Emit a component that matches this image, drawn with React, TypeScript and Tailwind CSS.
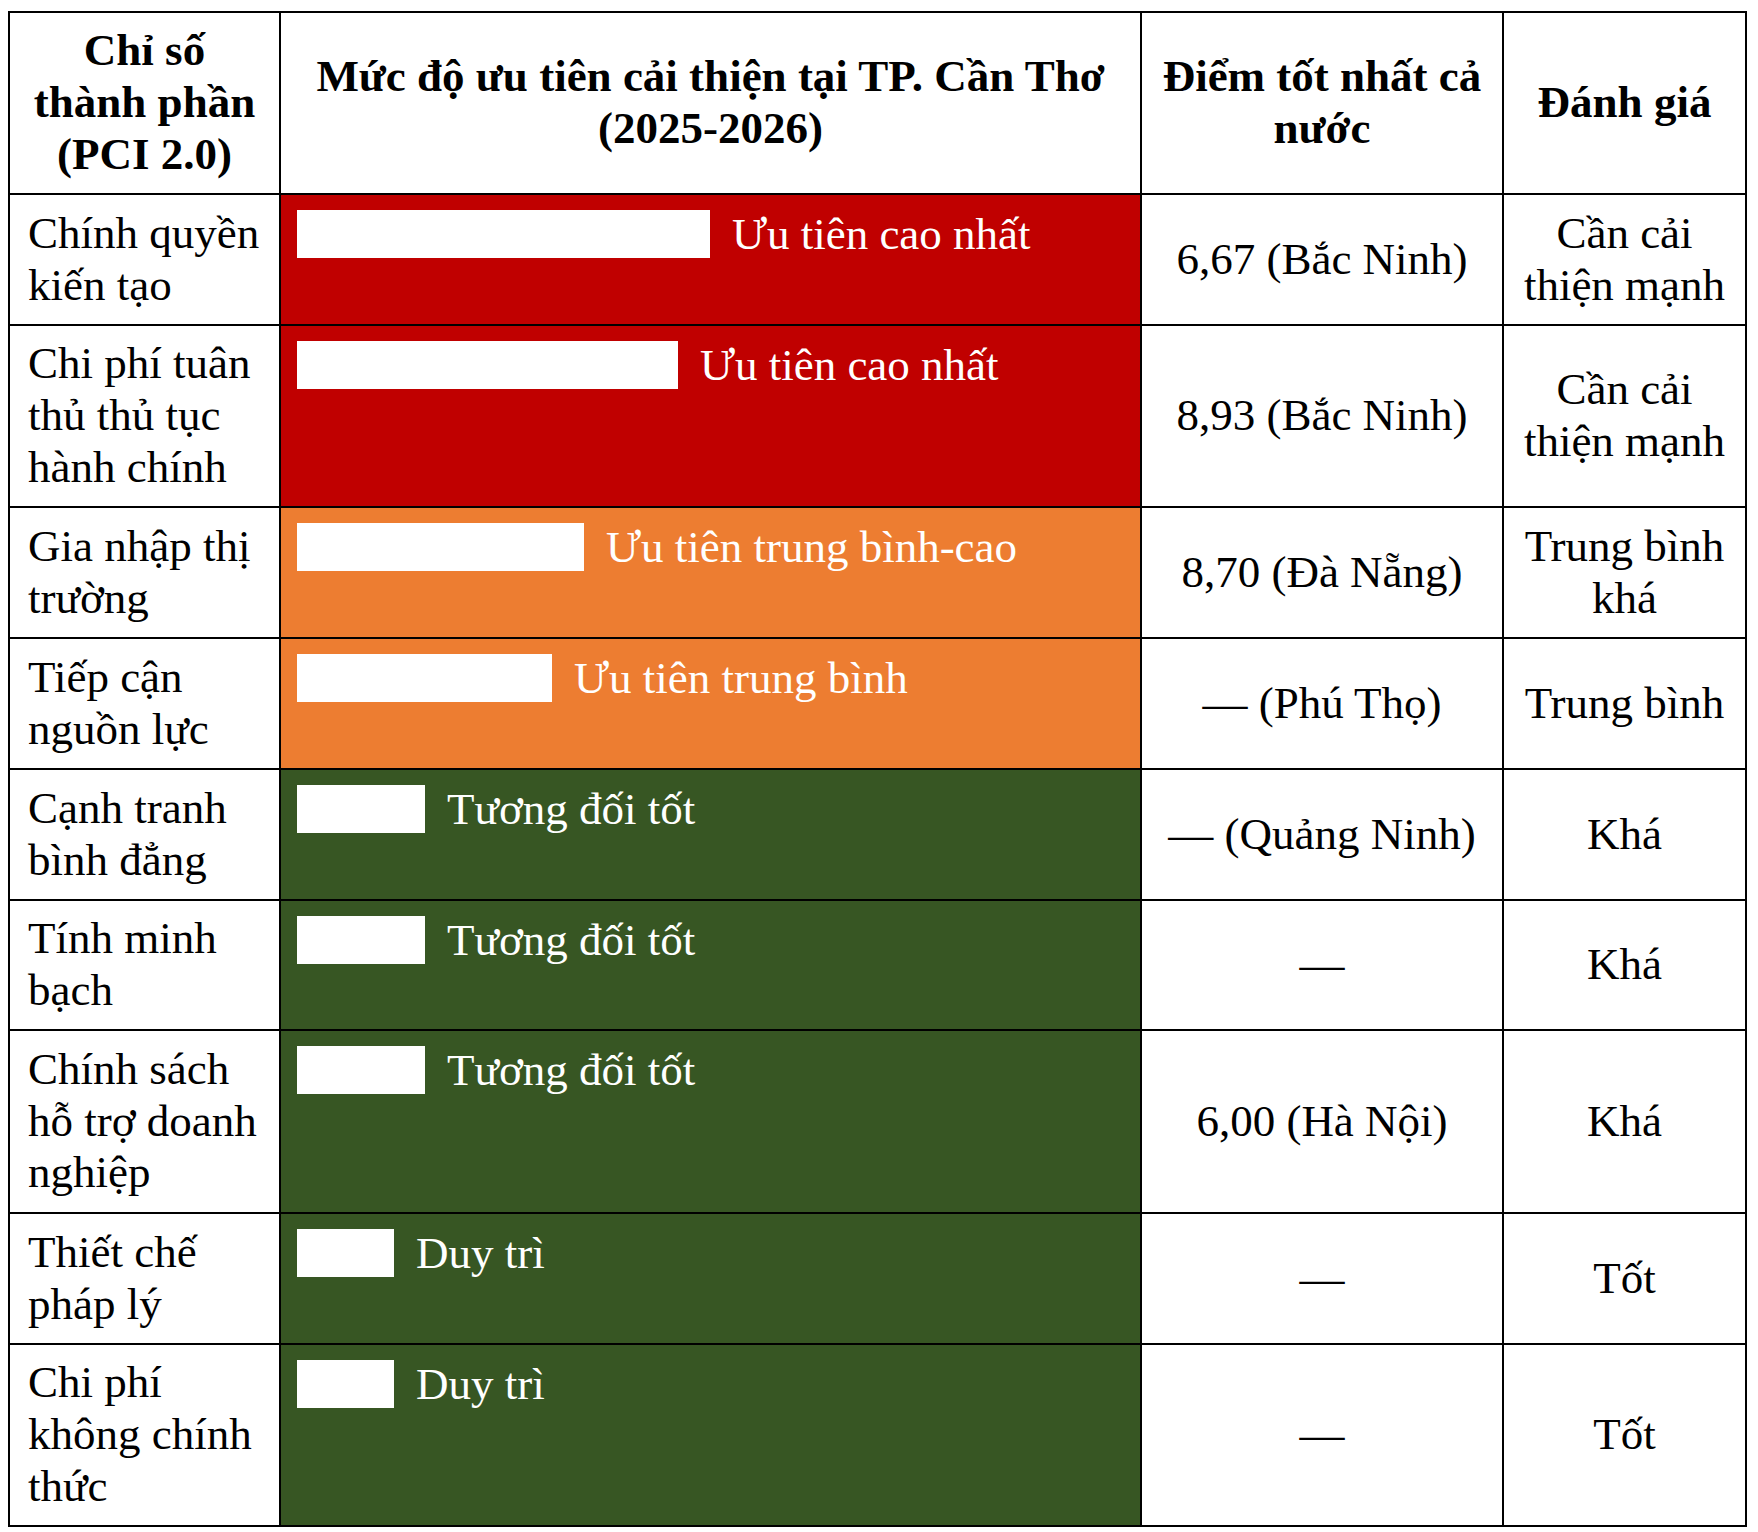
const RED = "bg-[#c00000]";
const ORANGE = "bg-[#ed7d31]";
const GREEN = "bg-[#375623]";

type Row = {
  name: string;
  color: string;
  bar: number;
  label: string;
  best: string;
  rating: string;
  height: string;
};

const rows: Row[] = [
  {
    name: "Chính quyền kiến tạo",
    color: RED,
    bar: 413,
    label: "Ưu tiên cao nhất",
    best: "6,67 (Bắc Ninh)",
    rating: "Cần cải thiện mạnh",
    height: "h-[131px]",
  },
  {
    name: "Chi phí tuân thủ thủ tục hành chính",
    color: RED,
    bar: 381,
    label: "Ưu tiên cao nhất",
    best: "8,93 (Bắc Ninh)",
    rating: "Cần cải thiện mạnh",
    height: "h-[182px]",
  },
  {
    name: "Gia nhập thị trường",
    color: ORANGE,
    bar: 287,
    label: "Ưu tiên trung bình-cao",
    best: "8,70 (Đà Nẵng)",
    rating: "Trung bình khá",
    height: "h-[131px]",
  },
  {
    name: "Tiếp cận nguồn lực",
    color: ORANGE,
    bar: 255,
    label: "Ưu tiên trung bình",
    best: "— (Phú Thọ)",
    rating: "Trung bình",
    height: "h-[131px]",
  },
  {
    name: "Cạnh tranh bình đẳng",
    color: GREEN,
    bar: 128,
    label: "Tương đối tốt",
    best: "— (Quảng Ninh)",
    rating: "Khá",
    height: "h-[131px]",
  },
  {
    name: "Tính minh bạch",
    color: GREEN,
    bar: 128,
    label: "Tương đối tốt",
    best: "—",
    rating: "Khá",
    height: "h-[130px]",
  },
  {
    name: "Chính sách hỗ trợ doanh nghiệp",
    color: GREEN,
    bar: 128,
    label: "Tương đối tốt",
    best: "6,00 (Hà Nội)",
    rating: "Khá",
    height: "h-[183px]",
  },
  {
    name: "Thiết chế pháp lý",
    color: GREEN,
    bar: 97,
    label: "Duy trì",
    best: "—",
    rating: "Tốt",
    height: "h-[131px]",
  },
  {
    name: "Chi phí không chính thức",
    color: GREEN,
    bar: 97,
    label: "Duy trì",
    best: "—",
    rating: "Tốt",
    height: "h-[182px]",
  },
];

const cell = "border-2 border-black p-0";

export default function App() {
  return (
    <div className="min-h-screen bg-white pl-[8px] pt-[11px] font-['Liberation_Serif','Times_New_Roman',serif] text-[45px] leading-[1.15] text-black">
      <table className="w-[1737px] table-fixed border-collapse">
        <colgroup>
          <col className="w-[271px]" />
          <col className="w-[861px]" />
          <col className="w-[362px]" />
          <col className="w-[243px]" />
        </colgroup>
        <thead>
          <tr className="h-[182px] font-bold">
            <th className={`${cell} px-[16px] text-center align-middle`}>
              Chỉ số thành phần (PCI 2.0)
            </th>
            <th className={`${cell} px-[16px] text-center align-middle`}>
              Mức độ ưu tiên cải thiện tại TP. Cần Thơ (2025-2026)
            </th>
            <th className={`${cell} px-[16px] text-center align-middle`}>
              Điểm tốt nhất cả nước
            </th>
            <th className={`${cell} px-[12px] text-center align-middle`}>
              Đánh giá
            </th>
          </tr>
        </thead>
        <tbody>
          {rows.map((r) => (
            <tr key={r.name} className={r.height}>
              <td className={`${cell} pl-[18px] pr-[8px] align-middle`}>
                {r.name}
              </td>
              <td className={`${cell} ${r.color} pl-[16px] pt-[14px] align-top`}>
                <div className="flex items-start gap-[22px] text-white">
                  <div
                    className="mt-[1px] h-[48px] shrink-0 bg-white"
                    style={{ width: r.bar }}
                  />
                  <span>{r.label}</span>
                </div>
              </td>
              <td className={`${cell} px-[10px] text-center align-middle`}>
                {r.best}
              </td>
              <td className={`${cell} px-[10px] text-center align-middle`}>
                {r.rating}
              </td>
            </tr>
          ))}
        </tbody>
      </table>
    </div>
  );
}
